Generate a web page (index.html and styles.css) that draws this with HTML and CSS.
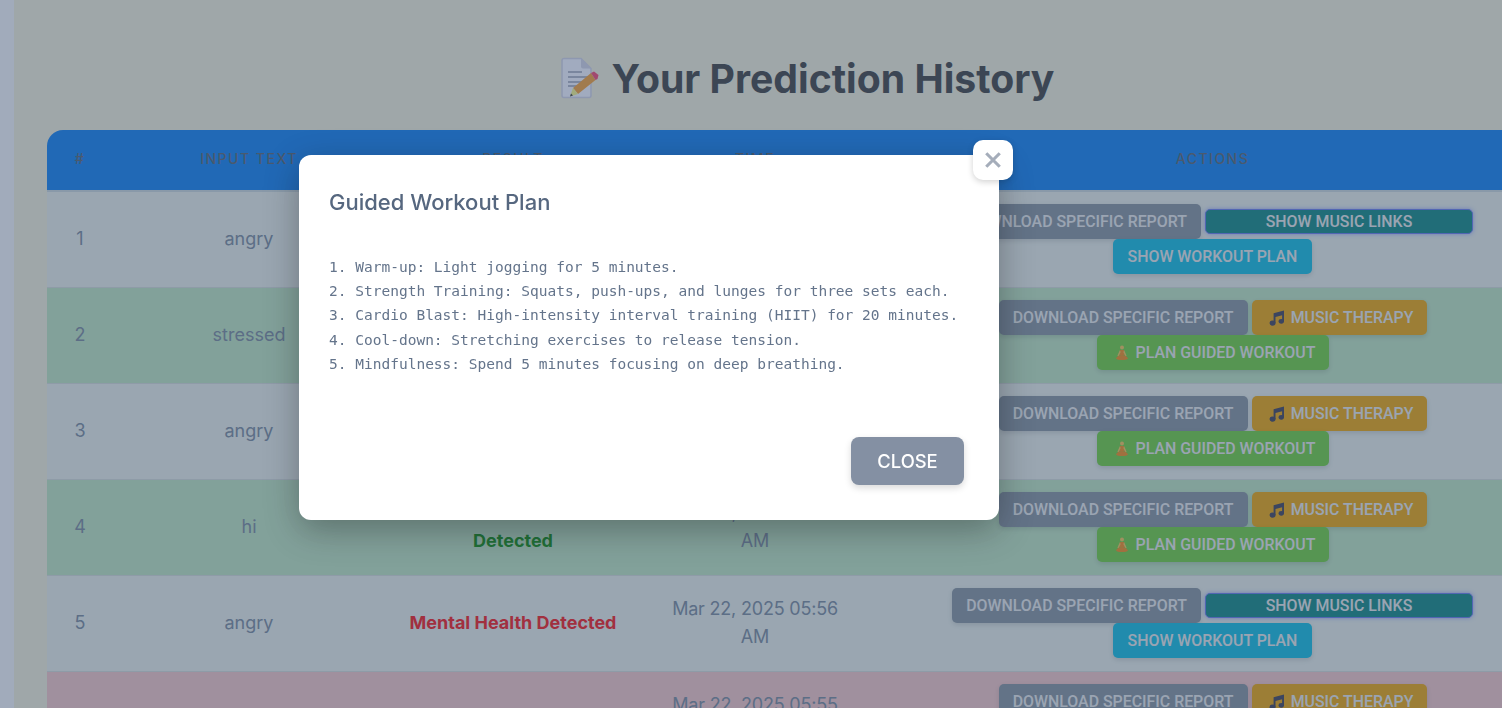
FILE: index.html
```html
<!DOCTYPE html>
<html lang="en">
<head>
    <meta charset="UTF-8">
    <meta name="viewport" content="width=device-width, initial-scale=1.0">
    <title>Your Prediction History</title>
    <link rel="stylesheet" href="styles.css">
</head>
<body>
    <svg width="0" height="0" class="defs">
        <symbol id="note" viewBox="0 0 16 16">
            <path d="M4.600 3.200 15 .400v11h-1.900V5.200L6.500 7v6.200H4.600z" fill="#555561"/>
            <ellipse cx="3.500" cy="13.100" rx="3" ry="2.600" fill="#555561"/>
            <ellipse cx="12.300" cy="11.300" rx="2.700" ry="2.400" fill="#555561"/>
        </symbol>
        <symbol id="yoga" viewBox="0 0 16 16">
            <circle cx="8" cy="2.600" r="2" fill="#ffd261"/>
            <path d="M6 5h4l.6 5h-5.200z" fill="#ff9d2b"/>
            <path d="M5.800 5.200 3.400 10.800l1.200.5L6.700 7zM10.200 5.200l2.400 5.600-1.200.5L9.300 7z" fill="#ffd261"/>
            <path d="M2 13.500c1-1.900 3.300-3.400 6-3.400s5 1.500 6 3.400c-1 1.100-3 1.500-6 1.500s-5-.4-6-1.500z" fill="#ff9d2b"/>
        </symbol>
    </svg>

    <div class="page">
        <h1 class="page-title">
            <svg class="memo" viewBox="0 0 41 42">
                <path d="M6 1.500h17l10 10v27a2 2 0 0 1-2 2H6a2 2 0 0 1-2-2v-35a2 2 0 0 1 2-2z" fill="#fff" stroke="#dfdfe6" stroke-width="1.500"/>
                <path d="M23 1.500v8a2 2 0 0 0 2 2h8z" fill="#dfdfe6"/>
                <path d="M10 15h14M10 20h20M10 25h16M10 29h9" stroke="#abadb7" stroke-width="1.500"/>
                <path d="M15 31 33 16l4.500 7L20 37z" fill="#ffaf44"/>
                <path d="M12 39.500 15 31l5 6z" fill="#ffff91"/>
                <path d="M12 39.500l1-3 2 2z" fill="#57574d"/>
                <path d="M33 16l3-1.500 4.500 3.500-1 4-2 1z" fill="#ff5d7b"/>
            </svg>
            Your Prediction History
        </h1>

        <table class="history">
            <colgroup>
                <col class="col-num"><col class="col-input"><col class="col-result"><col class="col-time"><col class="col-actions">
            </colgroup>
            <thead>
                <tr>
                    <th>#</th>
                    <th>Input Text</th>
                    <th>Result</th>
                    <th>Time</th>
                    <th>Actions</th>
                </tr>
            </thead>
            <tbody>
                <tr>
                    <td>1</td>
                    <td>angry</td>
                    <td class="bad">Mental Health Detected</td>
                    <td class="when">Mar 22, 2025 06:02 AM</td>
                    <td>
                        <div class="actions">
                            <button class="btn btn-report">Download Specific Report</button>
                            <button class="btn btn-links">Show Music Links</button>
                            <button class="btn btn-plan">Show Workout Plan</button>
                        </div>
                    </td>
                </tr>
                <tr class="row-ok">
                    <td>2</td>
                    <td>stressed</td>
                    <td class="good">No Mental Health Detected</td>
                    <td class="when">Mar 22, 2025 06:00 AM</td>
                    <td>
                        <div class="actions">
                            <button class="btn btn-report">Download Specific Report</button>
                            <button class="btn btn-music"><svg class="ico"><use href="#note"/></svg>Music Therapy</button>
                            <button class="btn btn-guided"><svg class="ico"><use href="#yoga"/></svg>Plan Guided Workout</button>
                        </div>
                    </td>
                </tr>
                <tr>
                    <td>3</td>
                    <td>angry</td>
                    <td class="bad">Mental Health Detected</td>
                    <td class="when">Mar 22, 2025 05:58 AM</td>
                    <td>
                        <div class="actions">
                            <button class="btn btn-report">Download Specific Report</button>
                            <button class="btn btn-music"><svg class="ico"><use href="#note"/></svg>Music Therapy</button>
                            <button class="btn btn-guided"><svg class="ico"><use href="#yoga"/></svg>Plan Guided Workout</button>
                        </div>
                    </td>
                </tr>
                <tr class="row-ok">
                    <td>4</td>
                    <td>hi</td>
                    <td class="good">No Mental Health Detected</td>
                    <td class="when">Mar 22, 2025 05:57 AM</td>
                    <td>
                        <div class="actions">
                            <button class="btn btn-report">Download Specific Report</button>
                            <button class="btn btn-music"><svg class="ico"><use href="#note"/></svg>Music Therapy</button>
                            <button class="btn btn-guided"><svg class="ico"><use href="#yoga"/></svg>Plan Guided Workout</button>
                        </div>
                    </td>
                </tr>
                <tr>
                    <td>5</td>
                    <td>angry</td>
                    <td class="bad">Mental Health Detected</td>
                    <td class="when">Mar 22, 2025 05:56 AM</td>
                    <td>
                        <div class="actions">
                            <button class="btn btn-report">Download Specific Report</button>
                            <button class="btn btn-links">Show Music Links</button>
                            <button class="btn btn-plan">Show Workout Plan</button>
                        </div>
                    </td>
                </tr>
                <tr class="row-alert">
                    <td>6</td>
                    <td>sad</td>
                    <td class="bad">Mental Health Detected</td>
                    <td class="when">Mar 22, 2025 05:55 AM</td>
                    <td>
                        <div class="actions">
                            <button class="btn btn-report">Download Specific Report</button>
                            <button class="btn btn-music"><svg class="ico"><use href="#note"/></svg>Music Therapy</button>
                            <button class="btn btn-guided"><svg class="ico"><use href="#yoga"/></svg>Plan Guided Workout</button>
                        </div>
                    </td>
                </tr>
            </tbody>
        </table>
    </div>

    <div class="overlay">
        <div class="modal">
            <button class="modal-x" aria-label="Close">
                <svg viewBox="0 0 16 16"><path d="M2 2l12 12M14 2 2 14"/></svg>
            </button>
            <h2 class="modal-title">Guided Workout Plan</h2>
            <div class="plan">1. Warm-up: Light jogging for 5 minutes.
2. Strength Training: Squats, push-ups, and lunges for three sets each.
3. Cardio Blast: High-intensity interval training (HIIT) for 20 minutes.
4. Cool-down: Stretching exercises to release tension.
5. Mindfulness: Spend 5 minutes focusing on deep breathing.</div>
            <div class="modal-foot">
                <button class="modal-close">Close</button>
            </div>
        </div>
    </div>
</body>
</html>
```

FILE: styles.css
```css
html, body {
    height: 100%;
}
body {
    margin: 0;
    padding-left: 14px;
    overflow: hidden;
    background-color: #fffff8;
    font-family: Inter, "Liberation Sans", sans-serif;
    color: #8c99a0;
}
.defs {
    position: absolute;
}
.page {
    width: 1584px;
    height: 100%;
    box-sizing: border-box;
    padding: 52px 33px 0;
    background-color: #fcf8da;
}
.page-title {
    display: flex;
    align-items: center;
    justify-content: center;
    gap: 13px;
    margin: 0 0 26px;
    height: 52px;
    font-size: 39.200px;
    font-weight: 700;
    color: #57574d;
}
.memo {
    width: 41px;
    height: 42px;
}
.history {
    width: 1509px;
    table-layout: fixed;
    border-collapse: separate;
    border-spacing: 0;
}
.col-num { width: 66px; }
.col-input { width: 272px; }
.col-result { width: 256px; }
.col-time { width: 228px; }
.col-actions { width: 687px; }
.history th {
    height: 62px;
    box-sizing: border-box;
    padding: 0 24px 3px;
    background-color: #2b91f0;
    border-bottom: 2px solid #d8e2da;
    font-size: 14px;
    font-weight: 500;
    letter-spacing: 1.5px;
    text-transform: uppercase;
    color: #6e7878;
}
.history th:first-child {
    border-top-left-radius: 16px;
}
.history td {
    height: 96px;
    box-sizing: border-box;
    padding: 12px 24px 13px;
    background-color: #f3f7e8;
    border-bottom: 1px solid #e0e4d8;
    font-size: 18px;
    line-height: 28px;
    text-align: center;
}
.history .row-ok td {
    background-color: #cceec2;
}
.history .row-alert td {
    background-color: #fdd2c8;
}
.history .when {
    letter-spacing: -0.2px;
}
.history .bad {
    font-weight: 700;
    color: #ff322b;
}
.history .good {
    font-weight: 700;
    color: #2b9d1e;
}
.actions {
    display: flex;
    flex-wrap: wrap;
    justify-content: center;
    align-items: center;
    column-gap: 4px;
}
.btn {
    height: 35px;
    padding: 0;
    border: none;
    border-radius: 5px;
    font-family: Roboto, "Liberation Sans", sans-serif;
    font-size: 15.900px;
    font-weight: 500;
    line-height: 35px;
    white-space: nowrap;
    text-transform: uppercase;
    color: #f4f4ea;
    box-shadow: 0 2px 5px rgba(0, 0, 0, 0.12);
}
.btn-report {
    width: 249px;
    background-color: #98a2a2;
}
.btn-links {
    width: 268px;
    height: 25px;
    line-height: 22px;
    background-color: #2b9889;
    border: 1px solid #7c8ceb;
    box-shadow: 0 0 4px rgba(90, 110, 255, 0.5);
}
.btn-plan {
    width: 199px;
    background-color: #2bcae1;
}
.btn-music {
    width: 175px;
    padding-left: 4px;
    background-color: #f7b51b;
}
.btn-guided {
    width: 232px;
    padding-left: 4px;
    background-color: #82da4a;
}
.ico {
    width: 16px;
    height: 16px;
    margin-right: 6px;
    vertical-align: -3px;
}
.overlay {
    position: fixed;
    inset: 0;
    background-color: rgba(20, 45, 95, 0.4);
}
.modal {
    position: absolute;
    left: 299px;
    top: 155px;
    display: flex;
    flex-direction: column;
    width: 700px;
    height: 365px;
    box-sizing: border-box;
    padding: 30px 35px 35px 30px;
    background-color: #fff;
    border-radius: 12px;
    box-shadow: 0 10px 35px rgba(0, 0, 0, 0.3);
}
.modal-x {
    position: absolute;
    top: -15px;
    right: -14px;
    display: flex;
    align-items: center;
    justify-content: center;
    width: 40px;
    height: 40px;
    padding: 0;
    border: none;
    border-radius: 10px;
    background-color: #fff;
    box-shadow: 0 2px 6px rgba(0, 0, 0, 0.18);
}
.modal-x svg {
    width: 18px;
    height: 18px;
    fill: none;
    stroke: #a5adba;
    stroke-width: 2.800;
}
.modal-title {
    margin: 0;
    font-size: 22px;
    font-weight: 500;
    line-height: 34px;
    color: #56677f;
}
.plan {
    margin-top: 35.800px;
    font-family: "DejaVu Sans Mono", monospace;
    font-size: 14.530px;
    line-height: 24.300px;
    white-space: pre-line;
    color: #64748b;
}
.modal-foot {
    display: flex;
    justify-content: flex-end;
    margin-top: auto;
}
.modal-close {
    width: 113px;
    height: 48px;
    border: none;
    border-radius: 8px;
    background-color: #8490a3;
    font-family: Inter, "Liberation Sans", sans-serif;
    font-size: 18.400px;
    font-weight: 500;
    text-transform: uppercase;
    color: #fff;
    box-shadow: 0 3px 7px rgba(0, 0, 0, 0.15);
}
```
